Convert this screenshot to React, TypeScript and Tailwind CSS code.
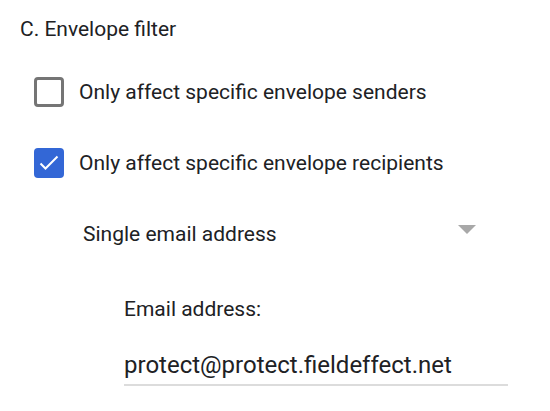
import React from "react";

export default function App() {
  return (
    <div className="w-[550px] h-[411px] bg-white text-[#202124] overflow-hidden" style={{ fontFamily: "Roboto, 'Liberation Sans', sans-serif" }}>
      <div className="pl-[20px] pt-[17px] text-[21px] leading-[24px]">C. Envelope filter</div>
      <div className="pl-[34px] mt-[36px] flex items-center gap-[15px]">
        <div className="w-[30px] h-[30px] rounded-[4px] border-[3px] border-[#757575] bg-white" />
        <span className="text-[21px] leading-[24px]">Only affect specific envelope senders</span>
      </div>
      <div className="pl-[34px] mt-[41px] flex items-center gap-[15px]">
        <div className="w-[30px] h-[30px] rounded-[4px] bg-[#3367d6] flex items-center justify-center">
          <svg width="24" height="24" viewBox="0 0 24 24" fill="none">
            <path d="M3.5 12.5l5 5L20.5 5.5" stroke="white" strokeWidth="2" />
          </svg>
        </div>
        <span className="text-[21px] leading-[24px]">Only affect specific envelope recipients</span>
      </div>
      <div className="pl-[83px] mt-[44px] w-[476px] flex items-start justify-between">
        <span className="text-[21px] leading-[24px]">Single email address</span>
        <svg className="mt-[3px]" width="18" height="9" viewBox="0 0 18 9"><path d="M0 0h18L9 9z" fill="#a8a8a8" /></svg>
      </div>
      <div className="pl-[124px] mt-[51px] text-[21px] leading-[24px]">Email address:</div>
      <div className="ml-[124px] mt-[30px] w-[384px] border-b-2 border-[#dcdcdc] pb-[5px] text-[24px] leading-[28px]">protect@protect.fieldeffect.net</div>
    </div>
  );
}
